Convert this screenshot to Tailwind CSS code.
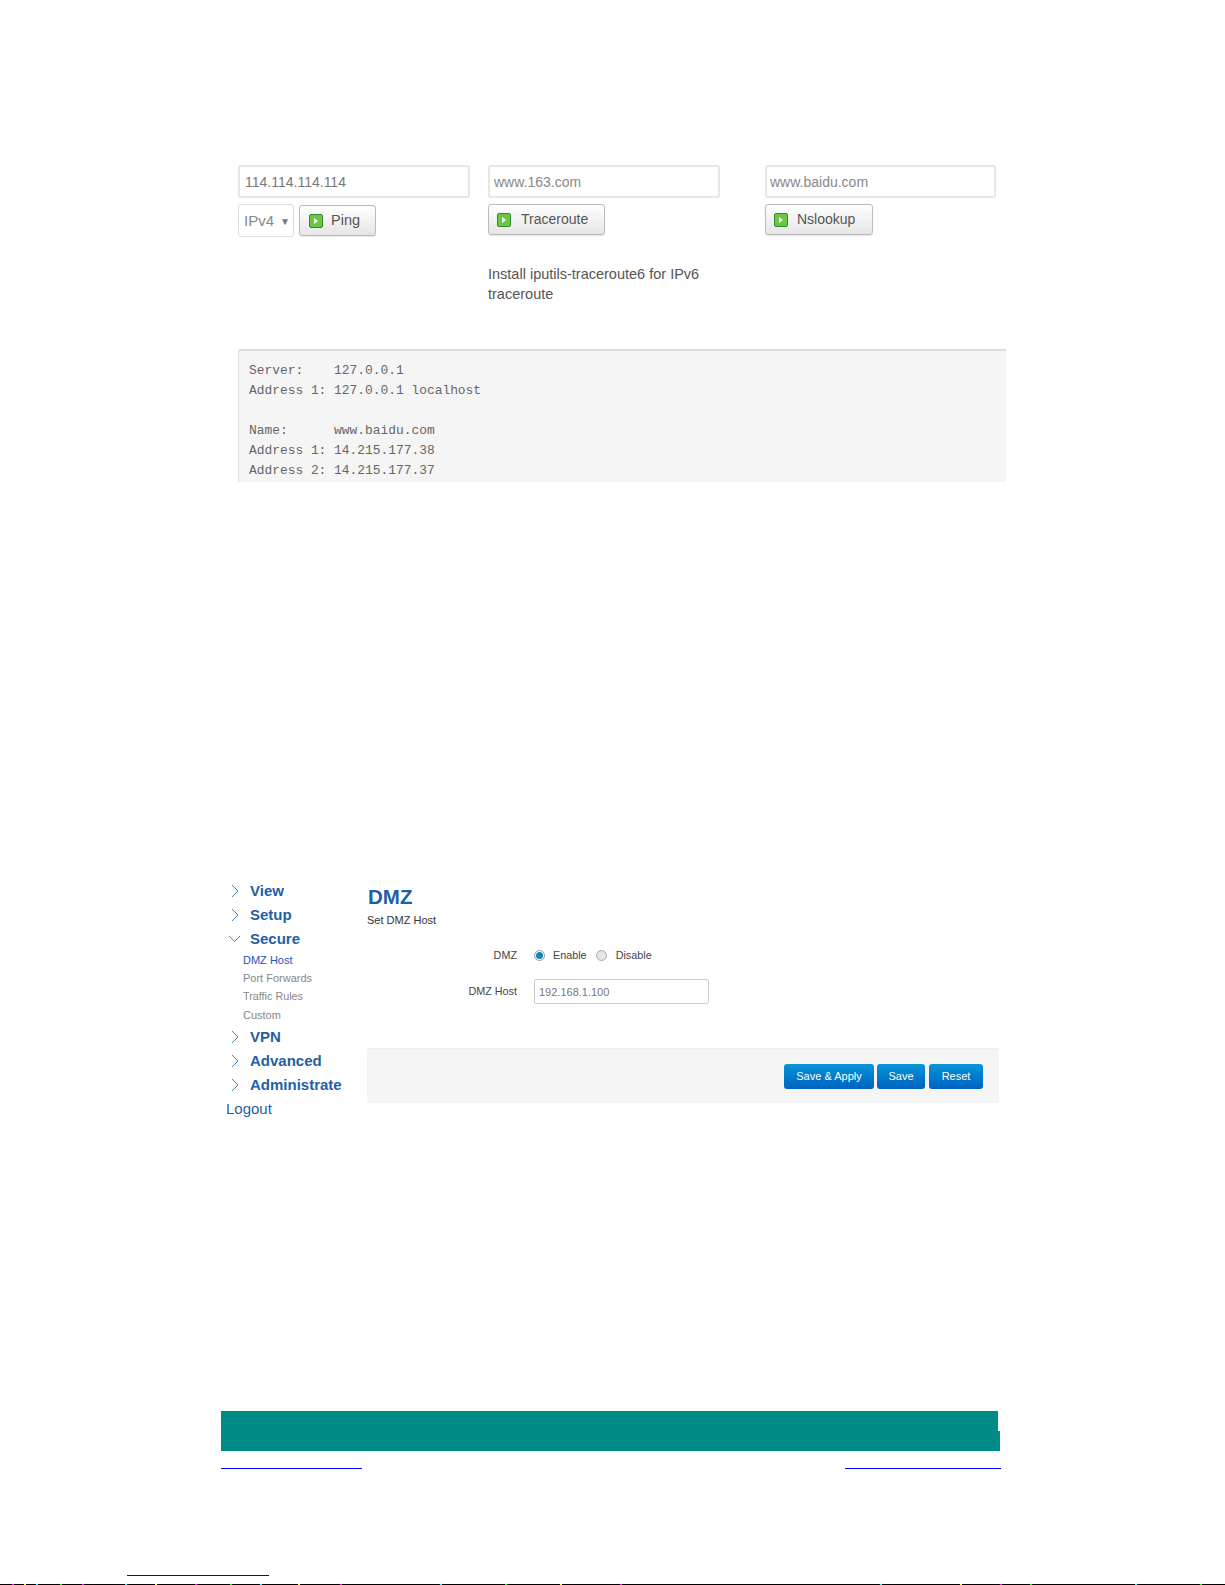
<!DOCTYPE html>
<html lang="en">
<head>
  <meta charset="UTF-8">
  <meta name="viewport" content="width=device-width, initial-scale=1.0">
  <title>Diagnostics and DMZ</title>
  <script src="https://cdn.jsdelivr.net/npm/@tailwindcss/browser@4"></script>
</head>
<body class="bg-white font-['Liberation_Sans',Arial,sans-serif]">
<div class="relative h-[1585px] w-[1225px] overflow-hidden">

  <!-- Diagnostics screenshot -->
  <section class="ml-[238px] w-[768px] pt-[165px] text-[14px] text-[#555]">
    <div class="flex h-[184px]">
      <div class="w-[231px]">
        <input value="114.114.114.114" class="block h-[33px] w-[232px] rounded-[3px] border-2 border-[#e6e6e6] px-[5px] text-[14px] text-[#777] outline-none">
        <div class="mt-[6px] flex items-start gap-[5px]">
          <div class="flex h-[33px] w-[56px] items-center rounded-[3px] border border-[#ddd] pt-px pl-[5px] text-[15px] text-[#888]">IPv4<span class="ml-[6px] text-[10px] text-[#777]">▼</span></div>
          <button class="mt-px flex h-[31px] w-[77px] items-center gap-[8px] rounded-[3px] border border-[#bbb] bg-gradient-to-b from-white to-[#e6e6e6] pl-[9px] shadow-[0_1px_1px_rgba(0,0,0,0.1)]">
            <span class="flex h-[14px] w-[14px] items-center justify-center rounded-[2px] border border-[#2f8f2f] bg-[#6cc644]"><svg width="6" height="8" viewBox="0 0 6 8"><path d="M1 1l4 3-4 3z" fill="#fff"/></svg></span>
            <span class="text-[14.5px] text-[#555]">Ping</span>
          </button>
        </div>
      </div>
      <div class="ml-[19px] w-[231px]">
        <input value="www.163.com" class="block h-[33px] w-[232px] rounded-[3px] border-2 border-[#e6e6e6] px-[4px] text-[14px] text-[#888] outline-none">
        <button class="mt-[6px] flex h-[31px] w-[117px] items-center gap-[10px] rounded-[3px] border border-[#bbb] bg-gradient-to-b from-white to-[#e6e6e6] pl-[8px] shadow-[0_1px_1px_rgba(0,0,0,0.1)]">
          <span class="flex h-[14px] w-[14px] items-center justify-center rounded-[2px] border border-[#2f8f2f] bg-[#6cc644]"><svg width="6" height="8" viewBox="0 0 6 8"><path d="M1 1l4 3-4 3z" fill="#fff"/></svg></span>
          <span class="text-[14px] text-[#555]">Traceroute</span>
        </button>
        <p class="mt-[29px] w-[220px] text-[14.5px] leading-[20px] text-[#555]">Install iputils-traceroute6 for IPv6 traceroute</p>
      </div>
      <div class="ml-[46px] w-[231px]">
        <input value="www.baidu.com" class="block h-[33px] w-full rounded-[3px] border-2 border-[#e6e6e6] px-[3px] text-[14px] text-[#888] outline-none">
        <button class="mt-[6px] flex h-[31px] w-[108px] items-center gap-[9px] rounded-[3px] border border-[#bbb] bg-gradient-to-b from-white to-[#e6e6e6] pl-[8px] shadow-[0_1px_1px_rgba(0,0,0,0.1)]">
          <span class="flex h-[14px] w-[14px] items-center justify-center rounded-[2px] border border-[#2f8f2f] bg-[#6cc644]"><svg width="6" height="8" viewBox="0 0 6 8"><path d="M1 1l4 3-4 3z" fill="#fff"/></svg></span>
          <span class="text-[14px] text-[#555]">Nslookup</span>
        </button>
      </div>
    </div>
    <pre class="h-[133px] overflow-hidden rounded-tl-[3px] border-t-2 border-l border-[#ddd] bg-[#f5f5f5] pt-[10px] pl-[10px] font-['Liberation_Mono','Courier_New',monospace] text-[12.9px] leading-[20px] text-[#666]">Server:    127.0.0.1
Address 1: 127.0.0.1 localhost

Name:      www.baidu.com
Address 1: 14.215.177.38
Address 2: 14.215.177.37</pre>
  </section>

  <!-- DMZ screenshot -->
  <section class="mt-[397px] ml-[227px] flex w-[772px]">
    <nav class="w-[140px] shrink-0 text-[#1f5fa5]">
      <ul>
        <li class="flex h-[24px] items-center gap-[11px] pl-[4px] text-[15px] font-bold"><svg width="8" height="14" viewBox="0 0 8 14" fill="none" stroke="#3d87b8"><path d="M1 1l6 6-6 6"/></svg><span>View</span></li>
        <li class="flex h-[24px] items-center gap-[11px] pl-[4px] text-[15px] font-bold"><svg width="8" height="14" viewBox="0 0 8 14" fill="none" stroke="#3d87b8"><path d="M1 1l6 6-6 6"/></svg><span>Setup</span></li>
        <li class="flex h-[24px] items-center gap-[9px] pl-[1px] text-[15px] font-bold"><svg width="13" height="8" viewBox="0 0 13 8" fill="none" stroke="#3d87b8"><path d="M1 1l5.500 5.500 5.500-5.500"/></svg><span>Secure</span></li>
        <li class="flex h-[18px] items-center pl-[16px] text-[11px] text-[#2a4fc0]">DMZ Host</li>
        <li class="flex h-[18px] items-center pl-[16px] text-[11px] text-[#888]">Port Forwards</li>
        <li class="flex h-[19px] items-center pl-[16px] text-[10.8px] text-[#888]">Traffic Rules</li>
        <li class="flex h-[19px] items-center pl-[16px] text-[11px] text-[#888]">Custom</li>
        <li class="flex h-[24px] items-center gap-[11px] pl-[4px] text-[15px] font-bold"><svg width="8" height="14" viewBox="0 0 8 14" fill="none" stroke="#3d87b8"><path d="M1 1l6 6-6 6"/></svg><span>VPN</span></li>
        <li class="flex h-[24px] items-center gap-[11px] pl-[4px] text-[15px] font-bold"><svg width="8" height="14" viewBox="0 0 8 14" fill="none" stroke="#3d87b8"><path d="M1 1l6 6-6 6"/></svg><span>Advanced</span></li>
        <li class="flex h-[24px] items-center gap-[11px] pl-[4px] text-[15px] font-bold"><svg width="8" height="14" viewBox="0 0 8 14" fill="none" stroke="#3d87b8"><path d="M1 1l6 6-6 6"/></svg><span>Administrate</span></li>
        <li class="-ml-px flex h-[25px] items-center text-[15px] text-[#1f5fa5]">Logout</li>
      </ul>
    </nav>
    <main class="w-[632px]">
      <h2 class="mt-[6px] pl-px text-[20.5px] leading-[24px] font-bold text-[#1f5fa5]">DMZ</h2>
      <p class="mt-[4px] text-[11px] leading-[14px] text-[#333]">Set DMZ Host</p>
      <div class="mt-[16px] flex h-[24px] items-center text-[10.8px] text-[#444]">
        <span class="w-[150px] text-right">DMZ</span>
        <span class="ml-[17px] flex h-[11px] w-[11px] items-center justify-center rounded-full border border-[#999] bg-white"><span class="h-[7px] w-[7px] rounded-full bg-[#1583b5]"></span></span>
        <span class="ml-[8px]">Enable</span>
        <span class="ml-[9px] h-[11px] w-[11px] rounded-full border border-[#aaa] bg-[#e6e6e6]"></span>
        <span class="ml-[9px]">Disable</span>
      </div>
      <div class="mt-[12px] flex items-center text-[10.8px] text-[#444]">
        <span class="w-[150px] text-right">DMZ Host</span>
        <input value="192.168.1.100" class="ml-[17px] h-[25px] w-[175px] rounded-[2px] border border-[#ccc] px-[4px] text-[11px] text-[#777] outline-none">
      </div>
      <div class="mt-[44px] flex h-[55px] items-center justify-end gap-[3px] rounded-[2px] border-t border-[#eee] bg-[#f5f5f5] pr-[16px]">
        <button class="h-[25px] w-[90px] rounded-[3px] bg-gradient-to-b from-[#0a94d8] to-[#0162c0] text-[11px] text-white">Save &amp; Apply</button>
        <button class="h-[25px] w-[48px] rounded-[3px] bg-gradient-to-b from-[#0a94d8] to-[#0162c0] text-[11px] text-white">Save</button>
        <button class="ml-[1px] h-[25px] w-[54px] rounded-[3px] bg-gradient-to-b from-[#0a94d8] to-[#0162c0] text-[11px] text-white">Reset</button>
      </div>
    </main>
  </section>

  <!-- Page footer -->
  <footer class="mt-[289px] ml-[221px] w-[780px]">
    <div class="h-[20px] w-[777px] bg-[#008b87]"></div>
    <div class="h-[20px] w-[779px] bg-[#008b87]"></div>
    <div class="mt-[17px] flex justify-between">
      <div class="h-px w-[141px] bg-[#0000ff]"></div>
      <div class="h-px w-[156px] bg-[#0000ff]"></div>
    </div>
  </footer>
  <div class="mt-[106px] ml-[127px] h-px w-[142px] bg-[#0000e0]"></div>

  <!-- bottom edge of the scan -->
  <svg class="absolute bottom-0 left-0 block" width="1225" height="1" viewBox="0 0 1225 1">
    <rect width="1225" height="1" fill="#000"/>
    <g fill="#ff00ff"><rect x="12" width="2" height="1"/><rect x="82" width="2" height="1"/><rect x="195" width="2" height="1"/><rect x="340" width="2" height="1"/><rect x="620" width="2" height="1"/><rect x="1000" width="2" height="1"/></g>
    <g fill="#00ffff"><rect x="36" width="2" height="1"/><rect x="125" width="2" height="1"/><rect x="260" width="2" height="1"/><rect x="440" width="2" height="1"/><rect x="880" width="2" height="1"/><rect x="1135" width="2" height="1"/></g>
    <g fill="#ffff00"><rect x="24" width="2" height="1"/><rect x="155" width="2" height="1"/><rect x="298" width="2" height="1"/><rect x="560" width="2" height="1"/><rect x="960" width="2" height="1"/></g>
    <g fill="#00ff00"><rect x="60" width="2" height="1"/><rect x="230" width="2" height="1"/><rect x="505" width="2" height="1"/><rect x="1030" width="2" height="1"/><rect x="1200" width="2" height="1"/></g>
  </svg>
</div>
</body>
</html>
